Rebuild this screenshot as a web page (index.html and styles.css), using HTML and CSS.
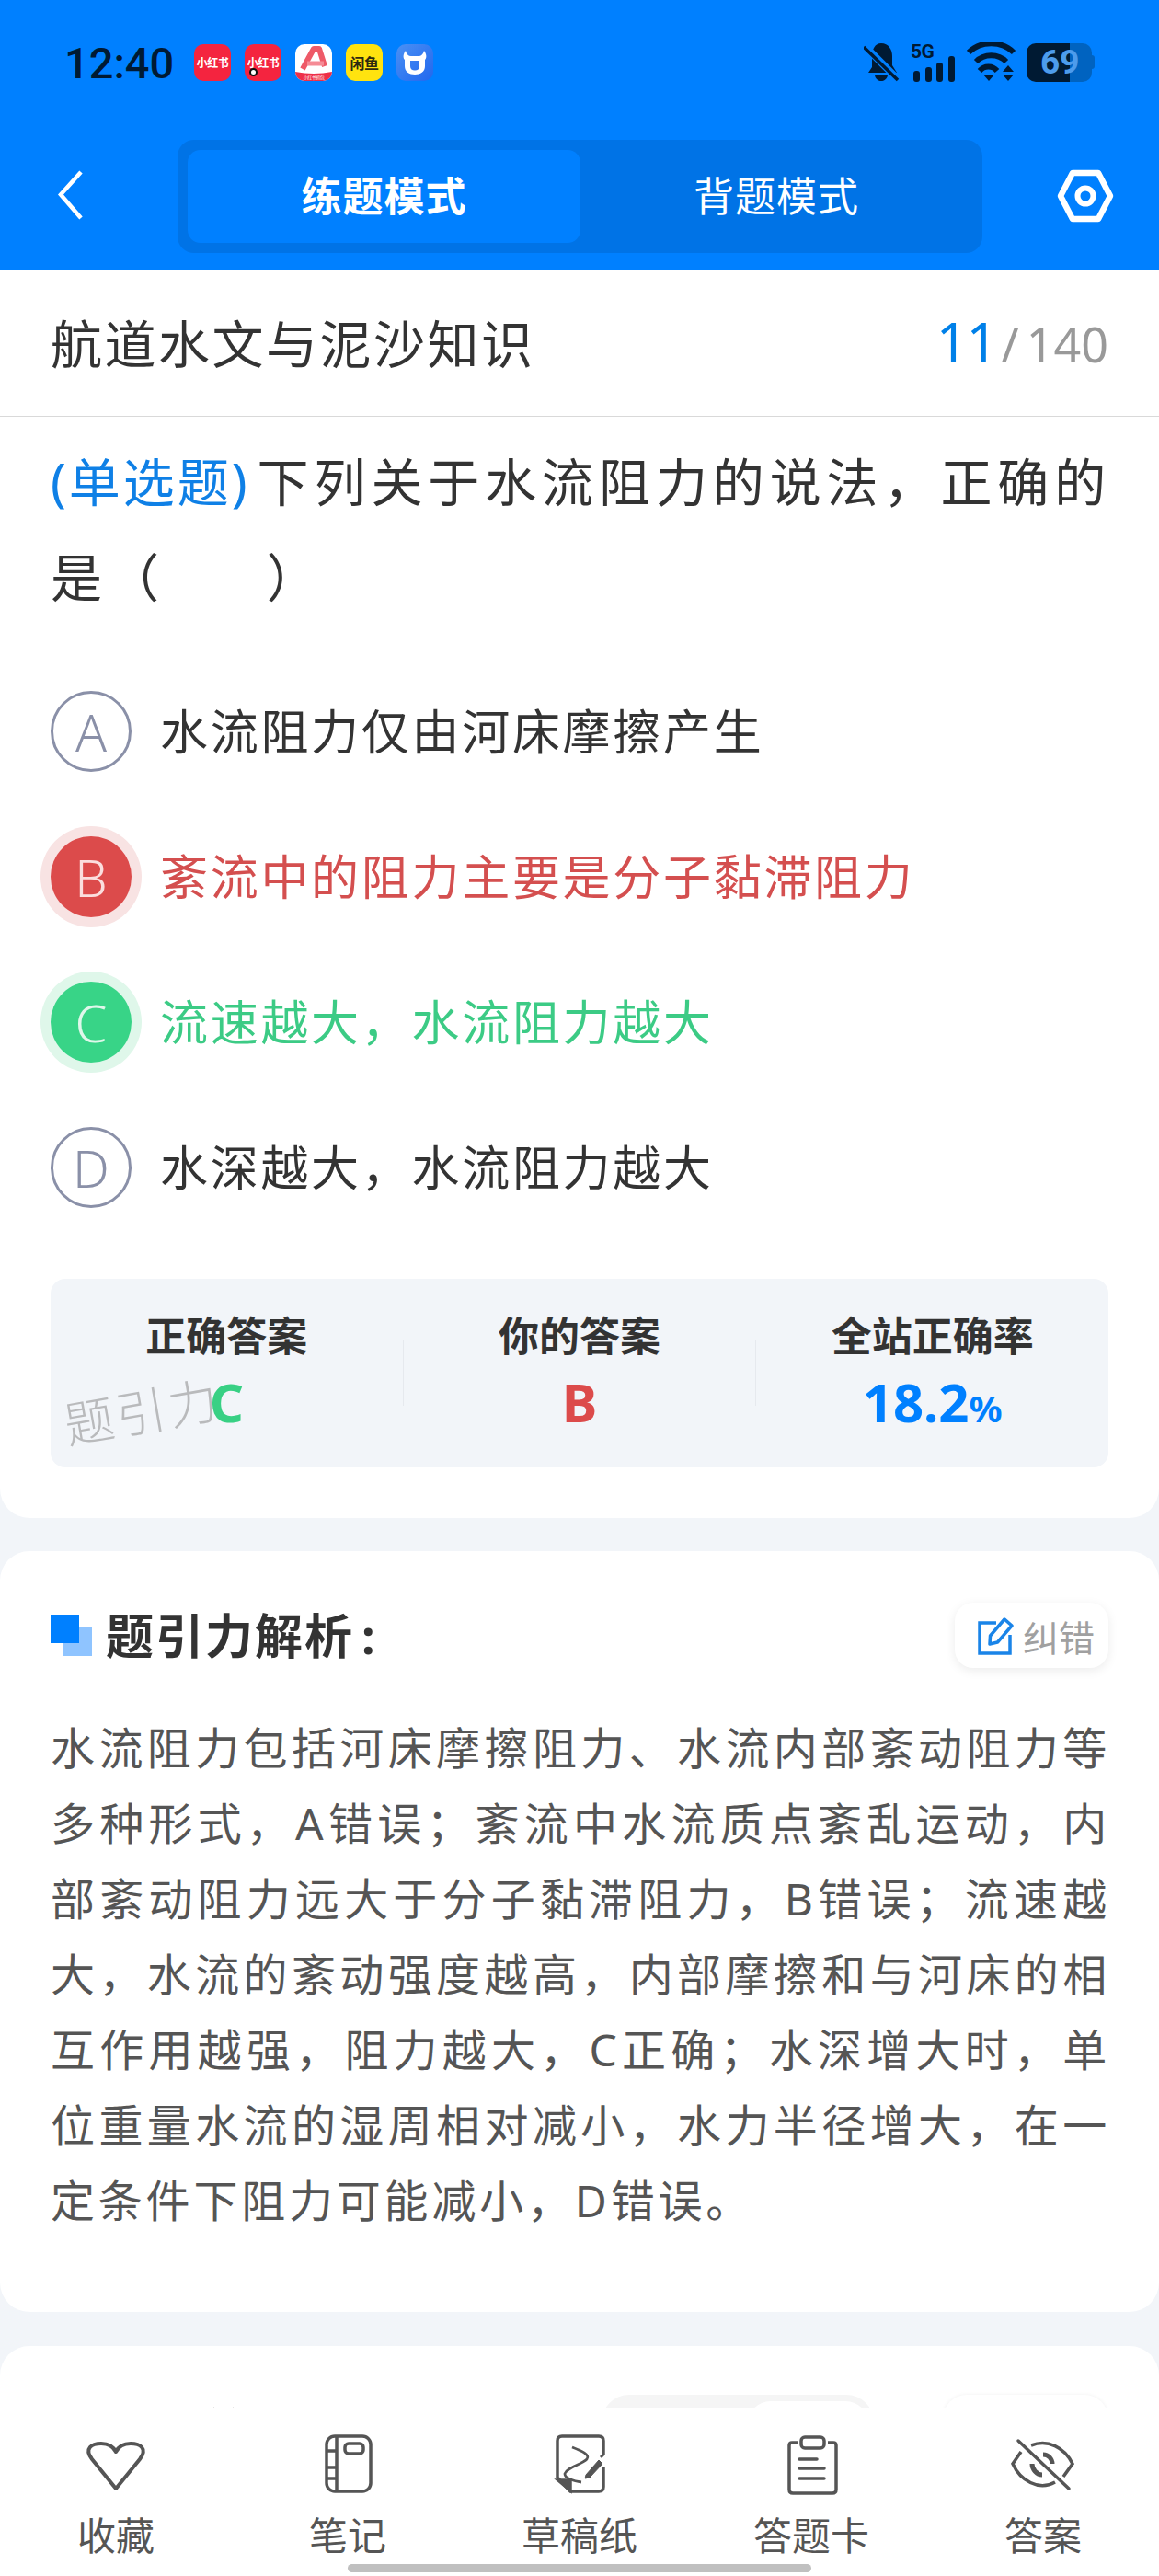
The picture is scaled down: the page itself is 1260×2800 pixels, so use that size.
FILE: index.html
```html
<!DOCTYPE html>
<html lang="zh-CN">
<head>
<meta charset="utf-8">
<title>航道水文与泥沙知识</title>
<link rel="stylesheet" href="styles.css">
</head>
<body>
<div class="page">
  <header class="topbar">
    <div class="status">
      <span class="time">12:40</span>
      <div class="apps">
        <span class="app app-red">小红书</span>
        <span class="app app-red app-dot">小红书<i class="dot"></i></span>
        <span class="app app-white">
          <svg width="40" height="40" viewBox="0 0 40 40"><path d="M8 27 L20 5 L26 5 L32 24" fill="none" stroke="#ee5a68" stroke-width="6" stroke-linejoin="round"/><path d="M13 21 H31" stroke="#f58b95" stroke-width="5"/><path d="M0 30 Q20 34 40 30 V40 H0 Z" fill="#ee2f48"/></svg>
          <em class="app-cap">小红书抓包</em>
        </span>
        <span class="app app-yellow">闲鱼</span>
        <span class="app app-blue">
          <svg width="40" height="40" viewBox="0 0 40 40"><path d="M10 7 C11 11 13 13 16 13 H24 C27 13 29 11 30 7 C33 11 33 15 31 17 V24 C31 30 26 33 20 33 C14 33 9 30 9 24 V17 C7 15 7 11 10 7 Z M15 18 V24 C15 27 17 28.500 20 28.500 C23 28.500 25 27 25 24 V18 Z" fill="#fff" fill-rule="evenodd"/></svg>
        </span>
      </div>
      <div class="sysicons">
        <svg width="40" height="44" viewBox="0 0 40 44" class="ic-dark"><path d="M19 1 C27 1 31 8 31 15 V25 L36 33 H5 L9 27 V15 C9 8 12 1 19 1 Z"/><path d="M12 36 H26 C25 40 22 42 19 42 C16 42 13 40 12 36 Z"/><path d="M1 4 L37 40" stroke="#0080ff" stroke-width="8"/><path d="M0 5 L37 41" stroke="#001a33" stroke-width="3.500"/></svg>
        <span class="signal">
          <b class="g5">5G</b>
          <svg width="50" height="30" viewBox="0 0 50 30" class="ic-dark"><rect x="3" y="17" width="7" height="12" rx="3"/><rect x="16" y="13" width="7" height="16" rx="3"/><rect x="28" y="8" width="7" height="21" rx="3"/><rect x="41" y="1" width="7" height="28" rx="3"/></svg>
        </span>
        <svg width="54" height="44" viewBox="0 0 54 44" class="wifi"><path d="M2 11 C15 -2 38 -2 51 11" fill="none" stroke="#001a33" stroke-width="6"/><path d="M10 21 C19 12 34 12 43 21" fill="none" stroke="#001a33" stroke-width="6"/><path d="M17 31 C22 25 31 25 36 31" fill="none" stroke="#001a33" stroke-width="6" transform="translate(-3 0)"/><path d="M18 35 H30 L24 42 Z" fill="#001a33"/><path d="M45 25 L51 32 H39 Z M39 35 H51 L45 42 Z" fill="#001a33"/></svg>
        <span class="battery"><span class="battery-level"></span><b class="battery-num">69</b><i class="battery-tip"></i></span>
      </div>
    </div>
    <nav class="nav">
      <svg class="back" width="40" height="60" viewBox="0 0 40 60"><path d="M31 3 L9 27.500 L31 53" fill="none" stroke="#fff" stroke-width="4.500"/></svg>
      <div class="seg">
        <span class="seg-item seg-on">练题模式</span>
        <span class="seg-item">背题模式</span>
      </div>
      <svg class="hex" width="64" height="60" viewBox="0 0 64 60"><path d="M18 4 H46 L59 29 L46 54 H18 L5 29 Z" fill="none" stroke="#fff" stroke-width="6.500" stroke-linejoin="round"/><circle cx="32" cy="29" r="8.500" fill="none" stroke="#fff" stroke-width="6"/></svg>
    </nav>
  </header>

  <section class="card card-first">
    <div class="titlerow">
      <h1 class="title">航道水文与泥沙知识</h1>
      <div class="count"><span class="count-now">11</span><span class="count-sep">/</span><span class="count-all">140</span></div>
    </div>
    <p class="question"><span class="qtag">(单选题)</span>下列关于水流阻力的说法，正确的<br>是（&emsp;&ensp;&thinsp;）</p>
    <ul class="options">
      <li class="option"><span class="badge">A</span><span class="opt-text">水流阻力仅由河床摩擦产生</span></li>
      <li class="option opt-wrong"><span class="badge">B</span><span class="opt-text">紊流中的阻力主要是分子黏滞阻力</span></li>
      <li class="option opt-right"><span class="badge">C</span><span class="opt-text">流速越大，水流阻力越大</span></li>
      <li class="option"><span class="badge">D</span><span class="opt-text">水深越大，水流阻力越大</span></li>
    </ul>
    <div class="stats">
      <div class="stat"><div class="stat-label">正确答案</div><div class="stat-value v-green">C</div></div>
      <i class="stat-div"></i>
      <div class="stat"><div class="stat-label">你的答案</div><div class="stat-value v-red">B</div></div>
      <i class="stat-div"></i>
      <div class="stat"><div class="stat-label">全站正确率</div><div class="stat-value v-blue">18.2<small class="pct">%</small></div></div>
      <span class="watermark">题引力</span>
    </div>
  </section>

  <section class="card card-mid">
    <div class="sechead">
      <div class="sectitle"><span class="secicon"></span><h2 class="sectext">题引力解析<span class="colon">:</span></h2></div>
      <button class="fixbtn">
        <svg width="42" height="42" viewBox="0 0 42 42"><path d="M21 7 H3 V40 H36 V20" fill="none" stroke="#1a84e8" stroke-width="3.500"/><path d="M14 30 L14.500 21 L30 3 L38 10 L22.500 28 Z" fill="none" stroke="#1a84e8" stroke-width="3.500" stroke-linejoin="round"/></svg>
        <span>纠错</span>
      </button>
    </div>
    <p class="analysis">水流阻力包括河床摩擦阻力、水流内部紊动阻力等多种形式，A错误；紊流中水流质点紊乱运动，内部紊动阻力远大于分子黏滞阻力，B错误；流速越大，水流的紊动强度越高，内部摩擦和与河床的相互作用越强，阻力越大，C正确；水深增大时，单位重量水流的湿周相对减小，水力半径增大，在一定条件下阻力可能减小，D错误。</p>
  </section>

  <section class="card card-last">
    <div class="sechead">
      <div class="sectitle"><span class="secicon"></span><h2 class="sectext">考友笔记</h2></div>
      <div class="sechead-right">
        <div class="switch"><span class="switch-on"></span></div>
        <div class="addchip"></div>
      </div>
    </div>
  </section>

  <footer class="tabbar">
    <div class="tab">
      <svg width="80" height="80" viewBox="0 0 80 80"><path d="M40 65 L14 33 C5 21 14 16 24 16 C31 16 37 19 40 25 C43 19 49 16 56 16 C66 16 75 21 66 33 Z" fill="none" stroke="#555" stroke-width="4" stroke-linejoin="round"/></svg>
      <span class="tab-label">收藏</span>
    </div>
    <div class="tab">
      <svg width="80" height="80" viewBox="0 0 80 80" fill="none" stroke="#555" stroke-width="3.500"><rect x="17" y="8" width="48" height="60" rx="9"/><path d="M28 8 V68 M17 24 H28 M17 42 H28 M17 54 H28"/><rect x="37" y="16" width="20" height="11" rx="4"/></svg>
      <span class="tab-label">笔记</span>
    </div>
    <div class="tab">
      <svg width="80" height="80" viewBox="0 0 80 80" fill="none" stroke="#555" stroke-width="3.500"><path d="M66 28 V13 Q66 8 61 8 H21 Q16 8 16 13 V53 L30 68 H61 Q66 68 66 63 V42"/><path d="M17 56 H30 V67 Z" fill="#555"/><path d="M32 20 C42 24 52 28 48 33 C42 39 26 42 24 49 C24 54 34 57 42 58" stroke-width="2.800"/><path d="M47 50 L61 34 L65 38 L51 53 L46 54 Z" fill="#555" stroke-width="1"/><path d="M63 31 L66 28" stroke-width="3"/></svg>
      <span class="tab-label">草稿纸</span>
    </div>
    <div class="tab">
      <svg width="80" height="80" viewBox="0 0 80 80" fill="none" stroke="#555" stroke-width="3.500"><path d="M25 15 H19 Q16 15 16 18 V66 Q16 70 20 70 H63 Q67 70 67 66 V18 Q67 15 64 15 H58"/><rect x="29" y="9" width="25" height="12" rx="4"/><path d="M27 33 H46 M27 43 H54 M27 54 H54" stroke-linecap="round"/></svg>
      <span class="tab-label">答题卡</span>
    </div>
    <div class="tab">
      <svg width="90" height="80" viewBox="0 0 90 80" fill="none" stroke="#555" stroke-width="3.500"><path d="M32 18 C50 11 68 20 77 38 L67 52 M21 25 L12 38 C20 56 40 68 58 58"/><path d="M18 13 L73 65" stroke-linecap="round"/><path d="M45 28 C51 28 55 33 55 38 M33 38 C33 44 38 50 44 50" stroke-width="5"/></svg>
      <span class="tab-label">答案</span>
    </div>
    <i class="homebar"></i>
  </footer>
</div>
</body>
</html>
```

FILE: styles.css
```css
* { box-sizing: border-box; margin: 0; padding: 0; }
html, body { width: 1260px; height: 2800px; overflow: hidden; }
body { font-family: "Noto Sans", "Noto Sans CJK SC", sans-serif; background: #f2f5f9; color: #333; }
.page { position: relative; width: 1260px; height: 2800px; overflow: hidden; }

.topbar { height: 294px; background: #0080ff; }
.status { height: 136px; display: flex; align-items: center; padding: 0 70px 0 70px; }
.time { font-family: Roboto, sans-serif; font-size: 47px; font-weight: 500; color: #001a33; width: 141px; }
.apps { display: flex; gap: 15px; }
.app { width: 40px; height: 40px; border-radius: 10px; display: flex; align-items: center; justify-content: center; position: relative; overflow: hidden; font-size: 12px; font-weight: 700; color: #fff; white-space: nowrap; letter-spacing: -0.500px; }
.app-red { background: #f4243f; }
.app-white { background: #fff; }
.app-cap { position: absolute; left: 0; right: 0; bottom: 1px; font-size: 5px; font-style: normal; font-weight: 400; text-align: center; color: #fff; }
.app-yellow { background: #ffe30f; color: #2d2a10; font-size: 16px; }
.app-blue { background: linear-gradient(135deg, #4a90f4, #2167ee); }
.dot { position: absolute; left: 5px; bottom: 5px; width: 9px; height: 9px; border-radius: 50%; background: #fff; border: 2.500px solid #111; }
.sysicons { margin-left: auto; display: flex; align-items: center; }
.sysicons > * { flex: none; }
.ic-dark { fill: #001a33; display: block; }
.signal { width: 50px; height: 42px; margin-left: 11px; position: relative; }
.signal svg { position: absolute; left: 0; bottom: -1px; }
.g5 { position: absolute; left: 0; top: -3px; font-size: 21px; line-height: 24px; color: #001a33; font-family: Roboto, sans-serif; font-weight: 700; letter-spacing: -0.500px; }
.wifi { margin-left: 11px; display: block; }
.battery { width: 74px; height: 42px; margin-left: 11px; position: relative; display: block; }
.battery-level { display: block; width: 71px; height: 42px; border-radius: 10px; background: linear-gradient(90deg, #001a33 0, #001a33 47px, #0063c0 47px); }
.battery-num { position: absolute; left: 15px; top: 0; font-family: Roboto, sans-serif; font-size: 37px; line-height: 42px; font-weight: 700; color: #4d9cec; }
.battery-tip { position: absolute; right: 0; top: 13px; width: 3px; height: 15px; background: #0063c0; border-radius: 0 3px 3px 0; }

.nav { margin-top: 16px; height: 123px; display: grid; grid-template-columns: 193px 875px 1fr; align-items: center; }
.back { margin-left: 57px; display: block; }
.hex { margin-left: 80px; display: block; }
.seg { height: 123px; background: #0073e6; border-radius: 18px; padding: 11px; display: flex; }
.seg-item { flex: 1; display: flex; align-items: center; justify-content: center; color: #fff; font-size: 44px; border-radius: 14px; letter-spacing: 1px; padding-bottom: 5px; }
.seg-on { flex: none; width: 427px; background: #0080ff; font-weight: 700; }

.card { background: #fff; }
.card-first { border-radius: 0 0 32px 32px; padding-bottom: 55px; height: 1356px; }
.titlerow { height: 159px; padding: 0 55px 5px; display: flex; align-items: center; justify-content: space-between; border-bottom: 1px solid #d9d9d9; }
.title { font-size: 56px; font-weight: 400; letter-spacing: 2.500px; color: #333; }
.count { display: flex; align-items: baseline; font-size: 52px; color: #999; }
.count-now { font-size: 60px; letter-spacing: -1.500px; color: #0080e8; }
.count-sep { margin: 0 8px 0 5px; }

.question { margin-top: 18px; padding: 0 40px 0 55px; font-size: 56px; line-height: 104px; letter-spacing: 5.900px; color: #333; height: 208px; white-space: nowrap; }
.qtag { color: #0f80e6; letter-spacing: 3px; margin-right: 8px; }

.options { list-style: none; margin-top: 37px; padding: 0 55px; }
.option { height: 158px; display: flex; align-items: center; }
.badge { width: 88px; height: 88px; border-radius: 50%; border: 3px solid #8a90a8; color: #8a90a8; font-size: 56px; font-weight: 300; display: flex; align-items: center; justify-content: center; margin-right: 31px; flex: none; }
.opt-text { font-size: 52px; letter-spacing: 2.700px; color: #333; padding-bottom: 6px; }
.opt-wrong .badge { background: #dc4b4b; border: 0; color: #fbdede; box-shadow: 0 0 0 11px #f8e3e3; }
.opt-wrong .opt-text { color: #d44f4f; }
.opt-right .badge { background: #38d487; border: 0; color: #dff7ea; box-shadow: 0 0 0 11px #dff7ea; }
.opt-right .opt-text { color: #3ccb85; }

.stats { position: relative; margin: 42px 55px 0; height: 205px; border-radius: 16px; background: #f2f5f9; display: flex; }
.stat { flex: 1; padding-top: 32px; text-align: center; }
.stat-label { font-size: 44px; line-height: 60px; font-weight: 700; color: #333; }
.stat-value { margin-top: 7px; font-size: 58px; line-height: 70px; font-weight: 700; }
.v-green { color: #38d084; }
.v-red { color: #dc4b4b; }
.v-blue { color: #0080ff; }
.pct { font-size: 40px; }
.stat-div { width: 1px; height: 71px; margin-top: 67px; background: #e6e9ee; flex: none; }
.watermark { position: absolute; left: 14px; top: 114px; font-size: 54px; line-height: 60px; font-weight: 300; letter-spacing: 3px; color: #b9babc; transform: rotate(-10deg); }

.card-mid { margin-top: 36px; height: 827px; border-radius: 32px; padding: 56px 55px 0; }
.card-last { margin-top: 37px; height: 400px; border-radius: 32px 32px 0 0; padding: 56px 55px 0; }
.sechead { height: 71px; display: flex; align-items: center; justify-content: space-between; }
.sectitle { display: flex; align-items: center; }
.secicon { position: relative; width: 45px; height: 45px; margin-right: 15px; flex: none; background: linear-gradient(#8fc4ff, #8fc4ff) 14px 14px / 31px 31px no-repeat; }
.secicon::before { content: ""; position: absolute; left: 0; top: 0; width: 31px; height: 31px; background: #0080ff; }
.sectext { font-size: 52px; font-weight: 700; letter-spacing: 2px; color: #333; padding-bottom: 5px; }
.colon { margin-left: 8px; }
.fixbtn { width: 167px; height: 71px; border: 0; border-radius: 20px; background: #fff; box-shadow: 0 3px 12px rgba(0, 0, 0, .08); display: flex; align-items: center; padding-left: 24px; font-family: inherit; font-size: 39px; color: #a0a0a0; }
.fixbtn svg { margin-right: 8px; flex: none; }
.analysis { margin: 46px -2px 0 0; font-size: 48px; line-height: 82px; letter-spacing: 3.800px; color: #555; text-align: justify; }
.sechead-right { display: flex; align-self: flex-start; margin-top: -3px; }
.switch { width: 296px; height: 71px; margin-right: 75px; border-radius: 30px; background: #f5f5f5; padding: 7px 5px; display: flex; justify-content: flex-end; }
.switch-on { width: 133px; border-radius: 26px; background: #fff; }
.addchip { width: 180px; height: 71px; border-radius: 26px; background: #fff; box-shadow: 0 0 4px rgba(0, 0, 0, .06); }

.tabbar { position: absolute; left: 0; right: 0; bottom: 0; height: 183px; background: #fff; display: grid; grid-template-columns: repeat(5, 252px); }
.tab { display: flex; flex-direction: column; align-items: center; padding-top: 23px; }
.tab svg { display: block; flex: none; }
.tab-label { margin-top: 11px; font-size: 42px; line-height: 50px; color: #555; }
.homebar { position: absolute; left: 378px; top: 170px; width: 504px; height: 9px; border-radius: 5px; background: #c0c0c0; }
```
